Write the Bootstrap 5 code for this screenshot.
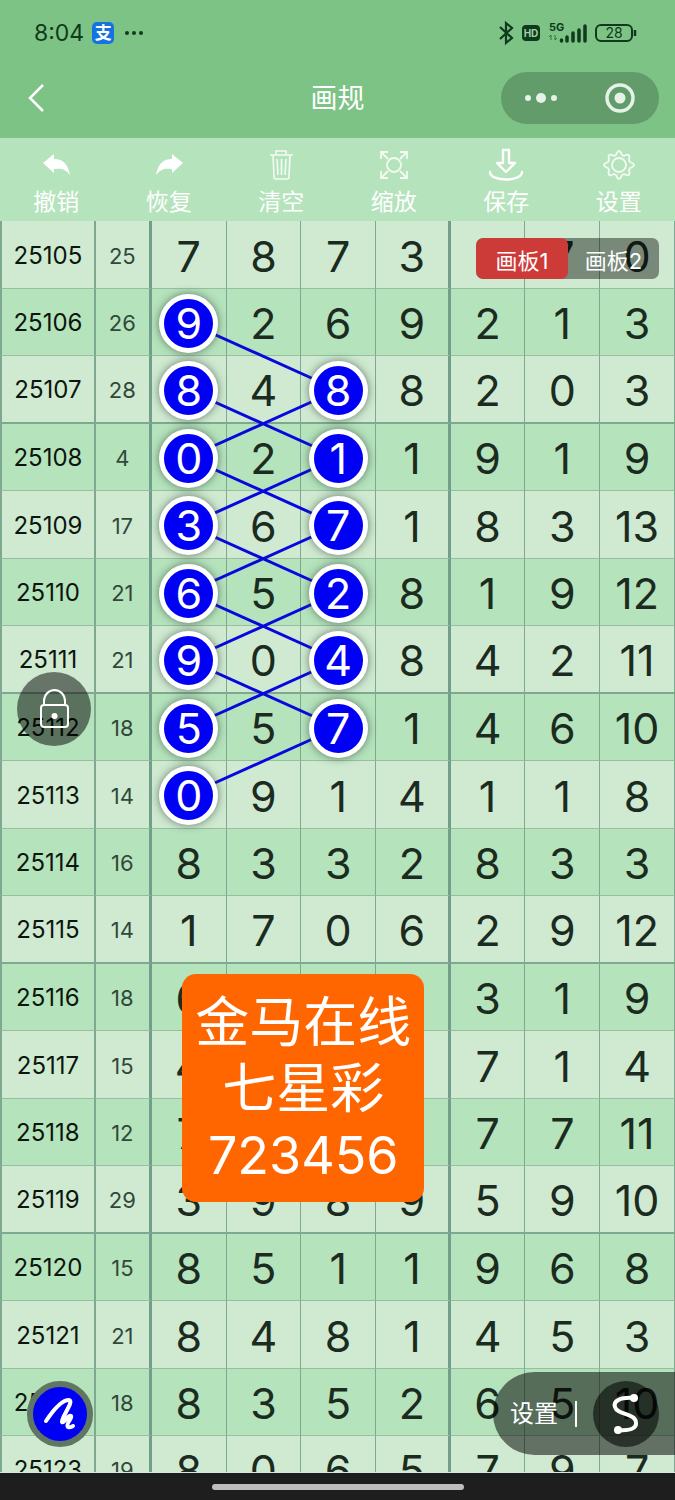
<!DOCTYPE html>
<html lang="zh-CN">
<head>
<meta charset="utf-8">
<meta name="viewport" content="width=device-width, initial-scale=1">
<title>画规</title>
<link href="https://cdn.jsdelivr.net/npm/bootstrap@5.3.0/dist/css/bootstrap.min.css" rel="stylesheet">
<style>
body{font-family:Inter,"Noto Sans CJK SC",sans-serif;background:#cfead1;color:#1c2b1f}
svg{display:block}
button{font-family:inherit;border:0;background:none;padding:0;color:#fff}
.top-area{background:#7dc385}
.status-row{height:66px;padding:0 38px 0 34px;color:#0f3a1c}
.clock{font-size:23px;line-height:28px}
.pay-icon{width:22px;height:22px;border-radius:5px;background:#1473e0;color:#fff;font-size:17px;font-weight:700;line-height:22px;text-align:center}
.title-row{height:72px;padding:0 16px 0 26px}
.title-row h1{font-size:27px;line-height:36px;font-weight:400;color:#fff;margin-bottom:6px}
.title-row>button{margin-bottom:8px}
.capsule{width:158px;height:52px;border-radius:26px;background:#629c6a;margin-bottom:8px}
.tools{height:83px;background:#b5e3bc}
.tools button{flex:1 1 0;font-size:23px;line-height:32px}
.stage{min-height:0}
.trend{table-layout:fixed;border-collapse:separate;border-spacing:0}
.trend th,.trend td{padding:2px 0 0;text-align:center;vertical-align:middle;font-weight:400;border:0 solid #7fa890;border-width:0 1px 1px 0;height:67px;line-height:58px;font-size:43px}
.trend tr:nth-child(odd)>*{height:68px;background:#cfead1}
.trend tr:nth-child(even)>*{background:#b5e3bc}
.trend tr>*{border-bottom-color:#95bfa0}
.trend tr:nth-child(4n+3)>*{border-bottom:2px solid #7fa890}
.trend th{font-size:24px;color:#0c150e;border-left-width:2px;border-right-width:2px}
.trend td:nth-child(2){font-size:22px;color:#32483a}
.trend td:nth-child(2),.trend td:nth-child(6){border-right:3px solid #729f8b}
.ball{display:block;position:relative;z-index:2;width:59px;height:59px;line-height:49px;margin:0 auto;border:5px solid #fff;border-radius:50%;background:#0000f5;color:#fff;box-shadow:0 0 9px #34483ab0}
.links{position:absolute;left:0;top:0;width:100%;height:608px;z-index:1}
.floating{position:absolute;z-index:3}
.boards{top:17px;right:16px;height:41px;border-radius:7px;background:rgba(0,0,0,.42);overflow:hidden}
.boards button{width:91px;padding-top:6px;font-size:22px;line-height:35px}
.boards .chosen{width:92px;background:#cd3b38;border-radius:7px}
.memo{left:27%;top:753px;width:242px;padding:16px 0 13px;border-radius:14px;background:#ff6600;color:#fff;font-size:54px;line-height:66px;text-align:center}
.memo span{font-size:52px}
.lock{left:17px;top:451px;width:74px;height:74px;border-radius:50%;background:rgba(0,0,0,.5)}
.pen{left:27px;bottom:25px;width:66px;height:66px;border-radius:50%;border:6px solid #607562;background:#0000f5}
.options{right:0;bottom:17px;width:182px;height:83px;padding:0 16px 0 17px;border-radius:42px 0 0 42px;background:rgba(0,0,0,.52);color:#fff}
.options .label-btn{font-size:24px;line-height:30px}
.divide{width:2px;height:26px;background:#fff}
.curve{width:66px;height:66px;border-radius:50%;background:rgba(0,0,0,.56)}
.home-row{height:28px;background:#1e1e1e;border-top:1px solid #d5ead8}
.home-row div{width:252px;height:6px;border-radius:3px;background:#bebebe}
</style>
</head>
<body class="d-flex flex-column vh-100 overflow-hidden">
<header class="top-area flex-shrink-0">
  <div class="status-row d-flex align-items-center justify-content-between">
    <div class="d-flex align-items-center">
      <span class="clock">8:04</span>
      <span class="pay-icon ms-2">支</span>
      <svg class="ms-2" width="24" height="6" fill="currentColor"><circle cx="5" cy="3" r="2"/><circle cx="12" cy="3" r="2"/><circle cx="19" cy="3" r="2"/></svg>
    </div>
    <svg width="140" height="26" viewBox="0 0 140 26" fill="none" stroke="#0f3a1c" stroke-width="2.2" font-family="Inter,sans-serif">
      <path d="M3 7l12 11-6 5V3l6 5L3 19"/>
      <rect x="25" y="5" width="18" height="16" rx="4" fill="#0f3a1c" stroke="none"/>
      <text x="34" y="17" font-size="10" font-weight="700" fill="#9fd3a5" stroke="none" text-anchor="middle">HD</text>
      <text x="52" y="11" font-size="11" font-weight="700" fill="#0f3a1c" stroke="none">5G</text>
      <path d="M54 15v5m-2-3 2-2m4 0v5l2-2" stroke-width="1" opacity=".6"/>
      <path d="M64.500 21v-1M70 21v-4M76 21v-8M82 21V10M88 21V6" stroke-width="3.500" stroke-linecap="round"/>
      <rect x="99" y="5" width="36" height="16" rx="5" stroke-width="2"/>
      <path d="M138 10v6" stroke-width="2.500"/>
      <text x="117" y="18" font-size="14" fill="#0f3a1c" stroke="none" text-anchor="middle">28</text>
    </svg>
  </div>
  <div class="title-row d-flex align-items-center justify-content-between position-relative">
    <button aria-label="返回"><svg width="20" height="30" fill="none" stroke="#fff" stroke-width="2.500"><path d="M17 2 4 15l13 13"/></svg></button>
    <h1 class="position-absolute start-50 translate-middle-x">画规</h1>
    <div class="capsule d-flex align-items-center justify-content-around">
      <button aria-label="更多"><svg width="34" height="12" fill="#e5f3e6"><circle cx="4" cy="6" r="3"/><circle cx="17" cy="6" r="5"/><circle cx="30" cy="6" r="3"/></svg></button>
      <button aria-label="关闭"><svg width="32" height="32" fill="none" stroke="#e5f3e6" stroke-width="3.500"><circle cx="16" cy="16" r="13"/><circle cx="16" cy="16" r="5.500" fill="#e5f3e6" stroke="none"/></svg></button>
    </div>
  </div>
</header>
<nav class="tools d-flex flex-shrink-0">
  <button class="d-flex flex-column align-items-center pt-2"><svg class="mb-1" width="36" height="36" viewBox="0 0 36 36" fill="#fff"><path d="M5 17 16 8v5c10 0 14 6 16 16-5-6-8-7-16-6v4z"/></svg>撤销</button>
  <button class="d-flex flex-column align-items-center pt-2"><svg class="mb-1" width="36" height="36" viewBox="0 0 36 36" fill="#fff"><path d="M32 17 21 8v5C11 13 7 19 5 29c5-6 8-7 16-6v4z"/></svg>恢复</button>
  <button class="d-flex flex-column align-items-center pt-2"><svg class="mb-1" width="36" height="36" viewBox="0 0 36 36" fill="none" stroke="#f3fbf3" stroke-width="1.600"><path d="M7 9h23M13 9V5h10v4M10 9l1 22q0 2 2 2h11q2 0 2-2l1-22M14 13l1 16M18.500 13v16M23 13l-1 16"/></svg>清空</button>
  <button class="d-flex flex-column align-items-center pt-2"><svg class="mb-1" width="36" height="36" viewBox="0 0 36 36" fill="none" stroke="#f3fbf3" stroke-width="1.800"><circle cx="18" cy="19" r="7"/><path d="M5 13V6h7M5 6l7 7M24 6h7v7M31 6l-7 7M5 25v7h7M5 32l7-7M24 32h7v-7M31 32l-7-7"/></svg>缩放</button>
  <button class="d-flex flex-column align-items-center pt-2"><svg class="mb-1" width="36" height="36" viewBox="0 0 36 36" fill="none" stroke="#fff" stroke-width="2.400" stroke-linecap="round" stroke-linejoin="round"><path d="M15 4h6v13h6l-9 9-9-9h6zM2 26c0 10 32 10 32 0"/></svg>保存</button>
  <button class="d-flex flex-column align-items-center pt-2"><svg class="mb-1" width="36" height="36" viewBox="0 0 36 36" fill="none" stroke="#f3fbf3" stroke-width="1.800" stroke-linejoin="round"><circle cx="18" cy="19" r="7"/><path d="M15 9q3-8 6 0l2 1q7-4 5 4l1 2q8 3 0 6l-1 2q2 8-5 4l-2 1q-3 8-6 0l-2-1q-7 4-5-4l-1-2q-8-3 0-6l1-2q-2-8 5-4z"/></svg>设置</button>
</nav>
<main class="stage flex-grow-1 position-relative overflow-hidden">
  <table class="trend w-100">
    <colgroup><col style="width:14.2%"><col style="width:8.3%"><col span="7" style="width:11.07%"></colgroup>
    <tbody id="rows"></tbody>
  </table>
  <svg class="links" viewBox="0 0 675 608" preserveAspectRatio="none" fill="none" stroke="#0808dc" stroke-width="3"><path id="strokes" vector-effect="non-scaling-stroke"/></svg>
  <div class="boards floating d-flex"><button class="chosen">画板1</button><button>画板2</button></div>
  <button class="lock floating d-flex align-items-center justify-content-center" aria-label="锁定"><svg width="32" height="42" fill="none" stroke="#fff" stroke-width="2"><rect x="3" y="17" width="27" height="22" rx="3"/><path d="M6 17v-4a10.500 11 0 0 1 21 0v4"/><circle cx="16.500" cy="28" r="3" fill="#fff" stroke="none"/></svg></button>
  <div class="memo floating">金马在线<br>七星彩<br><span>723456</span></div>
  <button class="pen floating d-flex align-items-center justify-content-center" aria-label="画笔"><svg width="38" height="38" fill="none" stroke="#fff" stroke-width="4" stroke-linecap="round" stroke-linejoin="round"><path d="M5 26C11 17 20 5 28 5c6 1-9 19-7 22 2 2 6-8 9-6 2 2-6 8-3 11 2 1 3 0 5-1"/></svg></button>
  <div class="options floating d-flex align-items-center justify-content-between">
    <button class="label-btn">设置</button><span class="divide"></span>
    <button class="curve d-flex align-items-center justify-content-center" aria-label="曲线"><svg width="34" height="44" fill="none" stroke="#fff" stroke-width="4"><path d="M25 6C11 5 4 9 6 15c2 8 20 6 21 15 1 7-7 9-18 8"/><circle cx="25" cy="6" r="4" fill="#fff" stroke="none"/><circle cx="9" cy="38" r="4" fill="#fff" stroke="none"/></svg></button>
  </div>
</main>
<footer class="home-row flex-shrink-0 d-flex align-items-center justify-content-center"><div></div></footer>
<script src="https://cdn.jsdelivr.net/npm/bootstrap@5.3.0/dist/js/bootstrap.bundle.min.js"></script>
<script>
// issue, sum, then the seven figures of each draw
const draws = `25105,25,7,8,7,3,,7,0
25106,26,9,2,6,9,2,1,3
25107,28,8,4,8,8,2,0,3
25108,4,0,2,1,1,9,1,9
25109,17,3,6,7,1,8,3,13
25110,21,6,5,2,8,1,9,12
25111,21,9,0,4,8,4,2,11
25112,18,5,5,7,1,4,6,10
25113,14,0,9,1,4,1,1,8
25114,16,8,3,3,2,8,3,3
25115,14,1,7,0,6,2,9,12
25116,18,6,,,,3,1,9
25117,15,4,,,,7,1,4
25118,12,7,,,,7,7,11
25119,29,3,9,8,9,5,9,10
25120,15,8,5,1,1,9,6,8
25121,21,8,4,8,1,4,5,3
25122,18,8,3,5,2,6,5,10
25123,19,8,0,6,5,7,9,7`.split('\n').map(r => r.split(','));
const marked = (r, c) => (c === 2 && r >= 1 && r <= 8) || (c === 4 && r >= 2 && r <= 7);
document.getElementById('rows').innerHTML = draws.map((d, r) => '<tr>' + d.map((v, c) =>
  c === 0 ? `<th scope="row">${v}</th>` : `<td>${marked(r, c) ? `<span class="ball">${v}</span>` : v}</td>`).join('') + '</tr>').join('');
// each stroke joins a marked figure to the one a row below in the other column
const mid = r => 34 + 67.5 * r;
let path = '';
for (let r = 1; r < 7; r++) path += `M188 ${mid(r)}L338 ${mid(r + 1)}M338 ${mid(r + 1)}L188 ${mid(r + 2)}`;
document.getElementById('strokes').setAttribute('d', path);
</script>
</body>
</html>
